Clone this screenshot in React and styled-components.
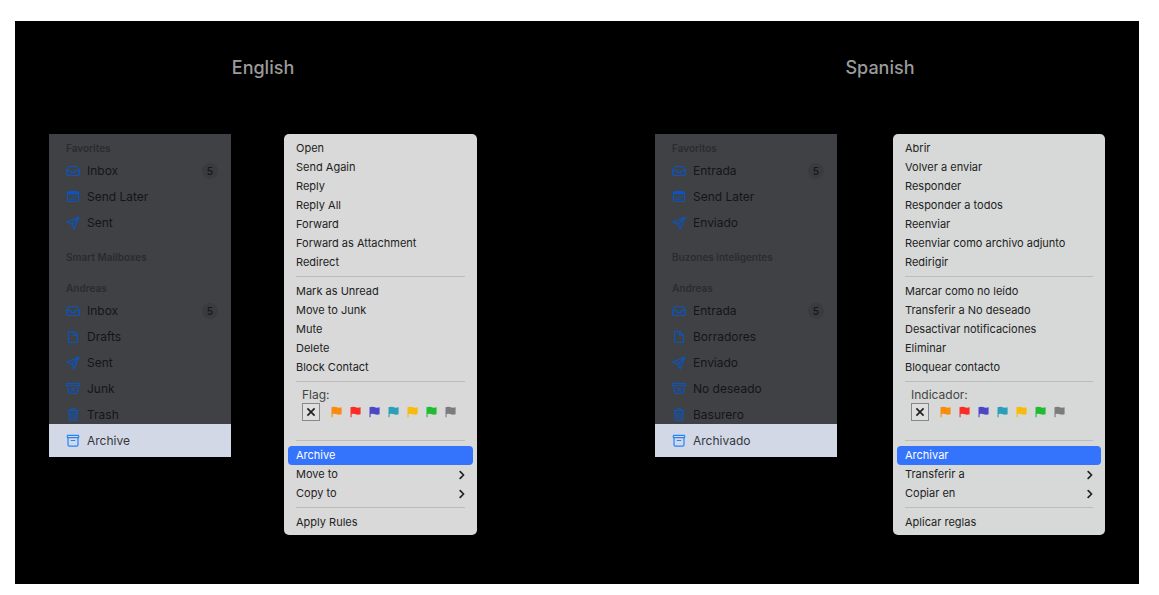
import styled, { createGlobalStyle } from "styled-components";

const GlobalStyle = createGlobalStyle`
    *, *::before, *::after {
        box-sizing: border-box;
    }
    body {
        margin: 0;
        background: #fff;
        font-family: Inter, "Liberation Sans", sans-serif;
    }
    button {
        font: inherit;
        color: inherit;
        border: 0;
        background: none;
        padding: 0;
        cursor: pointer;
    }
`;

const Stage = styled.main`
    margin: 21px 20px 11px 15px;
    padding: 35px 34px 49px;
    background: #000;
    display: flex;
    flex-wrap: wrap;
    justify-content: space-between;
    row-gap: 48px;
`,
Language = styled.section`
    display: flex;
    flex-direction: column;
    align-items: center;
`,
Title = styled.h2`
    margin: 0 0 54px;
    font-size: 18px;
    line-height: 24px;
    font-weight: 500;
    color: #9b9b9b;
`,
Panels = styled.div`
    display: flex;
    align-items: flex-start;
    gap: ${({ $wide }) => ($wide ? 56 : 53)}px;
`;

/* sidebar */
const Sidebar = styled.nav`
    width: 182px;
    padding-top: 4px;
    background: #404145;
`,
Group = styled.div`
    & + & {
        margin-top: 11px;
    }
`,
GroupTitle = styled.h3`
    margin: 0;
    padding-left: 17px;
    font-size: 10px;
    line-height: 20px;
    font-weight: 600;
    color: #2a2b2e;
`,
Mailbox = styled.a`
    position: relative;
    display: flex;
    align-items: center;
    gap: 7px;
    height: ${({ $active }) => ($active ? 33 : 26)}px;
    margin-top: ${({ $active }) => ($active ? -4 : 0)}px;
    padding: 0 13px 0 17px;
    background: ${({ $active }) => ($active ? "#d2d8e6" : "transparent")};
    color: ${({ $active }) => ($active ? "#34363b" : "#141517")};
    font-size: 12px;
    line-height: 16px;
    text-decoration: none;
    svg {
        flex: none;
        width: 14px;
        height: 14px;
        color: ${({ $active }) => ($active ? "#2486f8" : "#0a55c2")};
    }
`,
Badge = styled.span`
    width: 16px;
    height: 16px;
    margin-left: auto;
    border-radius: 50%;
    background: #3a3b3f;
    color: #17181a;
    font-size: 10px;
    font-weight: 600;
    text-align: center;
`;

/* context menu */
const Menu = styled.div`
    width: ${({ $wide }) => ($wide ? 212 : 193)}px;
    padding: 5px 4px 3px;
    border-radius: 5px;
    background: ${({ $wide }) => ($wide ? "#d7d9d8" : "#d9d9d9")};
    color: #222;
    font-size: 11px;
    line-height: 19px;
`,
MenuItem = styled.button`
    display: flex;
    align-items: center;
    justify-content: space-between;
    width: 100%;
    height: 19px;
    padding: 0 8px;
    border-radius: 4px;
    background: ${({ $active }) => ($active ? "#3473fb" : "transparent")};
    color: ${({ $active }) => ($active ? "#fff" : "#222")};
    text-align: left;
`,
Separator = styled.hr`
    height: 1px;
    margin: 4px 8px 5px;
    border: 0;
    background: #bcbcbc;
`,
Flags = styled.div`
    height: 49px;
    padding-left: 14px;
`,
FlagLabel = styled.div`
    color: #444;
    font-size: 12px;
    line-height: 16px;
`,
FlagRow = styled.div`
    display: flex;
    align-items: center;
    gap: 8px;
`,
NoFlag = styled.button`
    display: grid;
    place-items: center;
    width: 18px;
    height: 18px;
    margin-right: 3px;
    border: 1px solid #888;
    background: #dfdfdf;
`,
Flag = styled.button`
    display: flex;
    align-items: center;
    width: 11px;
    height: 18px;
    color: ${({ $color }) => $color};
`;

const Icon = ({ children }) => (
    <svg viewBox="0 0 14 14" fill="none" stroke="currentColor" strokeWidth="1.2" strokeLinecap="round" strokeLinejoin="round" aria-hidden="true">
        {children}
    </svg>
);

const icons = {
    inbox: (
        <Icon>
            <path d="M.6 7 2.3 3.5Q2.8 2.5 3.8 2.5h6.4q1 0 1.5 1L13.4 7v3q0 1.5-1.5 1.5H2.1Q.6 11.5.6 10Z" />
            <path d="M.8 6.5h3q.7 0 .9.7.6 1.5 2.3 1.5t2.3-1.5q.2-.7.9-.7h3" />
        </Icon>
    ),
    later: (
        <Icon>
            <rect x="1.5" y="1.5" width="11" height="10" rx="1.5" />
            <path d="M1.5 2.5h11M1.5 3.5h11" strokeWidth="1.4" />
            <path d="M6 6.5h5M3.4 8H11M3.4 9.5h5.2" strokeWidth=".9" strokeLinecap="butt" strokeDasharray="1.3 .6" />
        </Icon>
    ),
    sent: (
        <Icon>
            <path d="M12.7 1.3.9 6l4.9 2.2 2.3 4.9 4.6-11.8Z" />
            <path d="m5.8 8.2 5.2-5.2" />
            <path d="m12.7 1.3-2.5 1 1.5 1.5Z" fill="currentColor" />
        </Icon>
    ),
    drafts: (
        <Icon>
            <path d="M3.5 1.5h4.2l3.8 3.8v5.7q0 1.5-1.5 1.5H4q-1.5 0-1.5-1.5V2.5q0-1 1-1Z" />
            <path d="M7.5 1.5v3q0 1 1 1h3" />
        </Icon>
    ),
    junk: (
        <Icon>
            <rect x=".6" y="1.5" width="12.8" height="2" rx=".5" />
            <path d="m1.7 3.7.9 6.4q.2 1.4 1.6 1.4h5.6q1.4 0 1.6-1.4l.9-6.4M5.4 5.8l3.2 3.2M8.6 5.8 5.4 9" />
        </Icon>
    ),
    trash: (
        <Icon>
            <path d="M1.8 2.5h10.4M4.9 2.4V1.5q0-.9.9-.9h2.4q.9 0 .9.9v.9M2.8 2.7l.5 8.5q.1 1.3 1.4 1.3h4.6q1.3 0 1.4-1.3l.5-8.5" />
            <path d="m5.1 4.8.2 5.8M7 4.8v5.8M8.9 4.8l-.2 5.8" strokeWidth=".9" />
        </Icon>
    ),
    archive: (
        <Icon>
            <rect x="1.3" y="1.3" width="11.4" height="2.4" rx=".6" />
            <path d="M2 4v6.8q0 1.4 1.4 1.4h7.2q1.4 0 1.4-1.4V4M5.2 6.5h3.6" />
        </Icon>
    ),
};

const Chevron = () => (
    <svg width="6" height="10" viewBox="0 0 6 10" fill="none" stroke="currentColor" strokeWidth="1.7" strokeLinecap="round" strokeLinejoin="round" aria-hidden="true">
        <path d="M1.2 1.6 4.6 5 1.2 8.4" />
    </svg>
);

const flagColors = {
    Orange: "#fb8b0c",
    Red: "#fb2c25",
    Purple: "#4c46c6",
    Teal: "#2a9fb9",
    Yellow: "#f8ba0b",
    Green: "#1fbc32",
    Gray: "#7c7c7f",
};

const languages = [
    {
        title: "English",
        lang: "en",
        groups: [
            {
                title: "Favorites",
                boxes: [["inbox", "Inbox", 5], ["later", "Send Later"], ["sent", "Sent"]],
            },
            { title: "Smart Mailboxes", boxes: [] },
            {
                title: "Andreas",
                boxes: [
                    ["inbox", "Inbox", 5],
                    ["drafts", "Drafts"],
                    ["sent", "Sent"],
                    ["junk", "Junk"],
                    ["trash", "Trash"],
                    ["archive", "Archive"],
                ],
            },
        ],
        open: ["Open", "Send Again", "Reply", "Reply All", "Forward", "Forward as Attachment", "Redirect"],
        mark: ["Mark as Unread", "Move to Junk", "Mute", "Delete", "Block Contact"],
        flag: "Flag:",
        archive: "Archive",
        submenus: ["Move to", "Copy to"],
        rules: "Apply Rules",
    },
    {
        title: "Spanish",
        lang: "es",
        wide: true,
        groups: [
            {
                title: "Favoritos",
                boxes: [["inbox", "Entrada", 5], ["later", "Send Later"], ["sent", "Enviado"]],
            },
            { title: "Buzones inteligentes", boxes: [] },
            {
                title: "Andreas",
                boxes: [
                    ["inbox", "Entrada", 5],
                    ["drafts", "Borradores"],
                    ["sent", "Enviado"],
                    ["junk", "No deseado"],
                    ["trash", "Basurero"],
                    ["archive", "Archivado"],
                ],
            },
        ],
        open: ["Abrir", "Volver a enviar", "Responder", "Responder a todos", "Reenviar", "Reenviar como archivo adjunto", "Redirigir"],
        mark: ["Marcar como no leído", "Transferir a No deseado", "Desactivar notificaciones", "Eliminar", "Bloquear contacto"],
        flag: "Indicador:",
        archive: "Archivar",
        submenus: ["Transferir a", "Copiar en"],
        rules: "Aplicar reglas",
    },
];

const MailSidebar = ({ groups }) => (
    <Sidebar>
        {groups.map((group) => (
            <Group key={group.title}>
                <GroupTitle>{group.title}</GroupTitle>
                {group.boxes.map(([icon, name, count]) => (
                    <Mailbox key={icon} href={`#${icon}`} $active={icon === "archive"}>
                        {icons[icon]}
                        <span>{name}</span>
                        {count && <Badge>{count}</Badge>}
                    </Mailbox>
                ))}
            </Group>
        ))}
    </Sidebar>
);

const ContextMenu = ({ data }) => (
    <Menu role="menu" $wide={data.wide}>
        {data.open.map((label) => <MenuItem key={label} role="menuitem">{label}</MenuItem>)}
        <Separator />
        {data.mark.map((label) => <MenuItem key={label} role="menuitem">{label}</MenuItem>)}
        <Separator />
        <Flags>
            <FlagLabel>{data.flag}</FlagLabel>
            <FlagRow>
                <NoFlag aria-label="No flag">
                    <svg width="10" height="10" viewBox="0 0 10 10" stroke="#222" strokeWidth="1.7" aria-hidden="true">
                        <path d="m1.4 1.4 7.2 7.2M8.6 1.4 1.4 8.6" />
                    </svg>
                </NoFlag>
                {Object.entries(flagColors).map(([name, color]) => (
                    <Flag key={name} $color={color} aria-label={name}>
                        <svg width="11" height="12" viewBox="0 0 11 12" fill="currentColor" aria-hidden="true">
                            <path d="M.5 1.3Q3 .1 5.2 1.1T10.6 1.3V8.2Q8 9.1 5.8 8.2T1.6 8.1V11.3H.5Z" />
                        </svg>
                    </Flag>
                ))}
            </FlagRow>
        </Flags>
        <Separator />
        <MenuItem role="menuitem" $active>{data.archive}</MenuItem>
        {data.submenus.map((label) => (
            <MenuItem key={label} role="menuitem" aria-haspopup="menu">
                {label}
                <Chevron />
            </MenuItem>
        ))}
        <Separator />
        <MenuItem role="menuitem">{data.rules}</MenuItem>
    </Menu>
);

const App = () => {

    return (
        <>
            <GlobalStyle />
            <Stage>
                {languages.map((data) => (
                    <Language key={data.lang}>
                        <Title>{data.title}</Title>
                        <Panels lang={data.lang} $wide={data.wide}>
                            <MailSidebar groups={data.groups} />
                            <ContextMenu data={data} />
                        </Panels>
                    </Language>
                ))}
            </Stage>
        </>
    );
}

export default App;
